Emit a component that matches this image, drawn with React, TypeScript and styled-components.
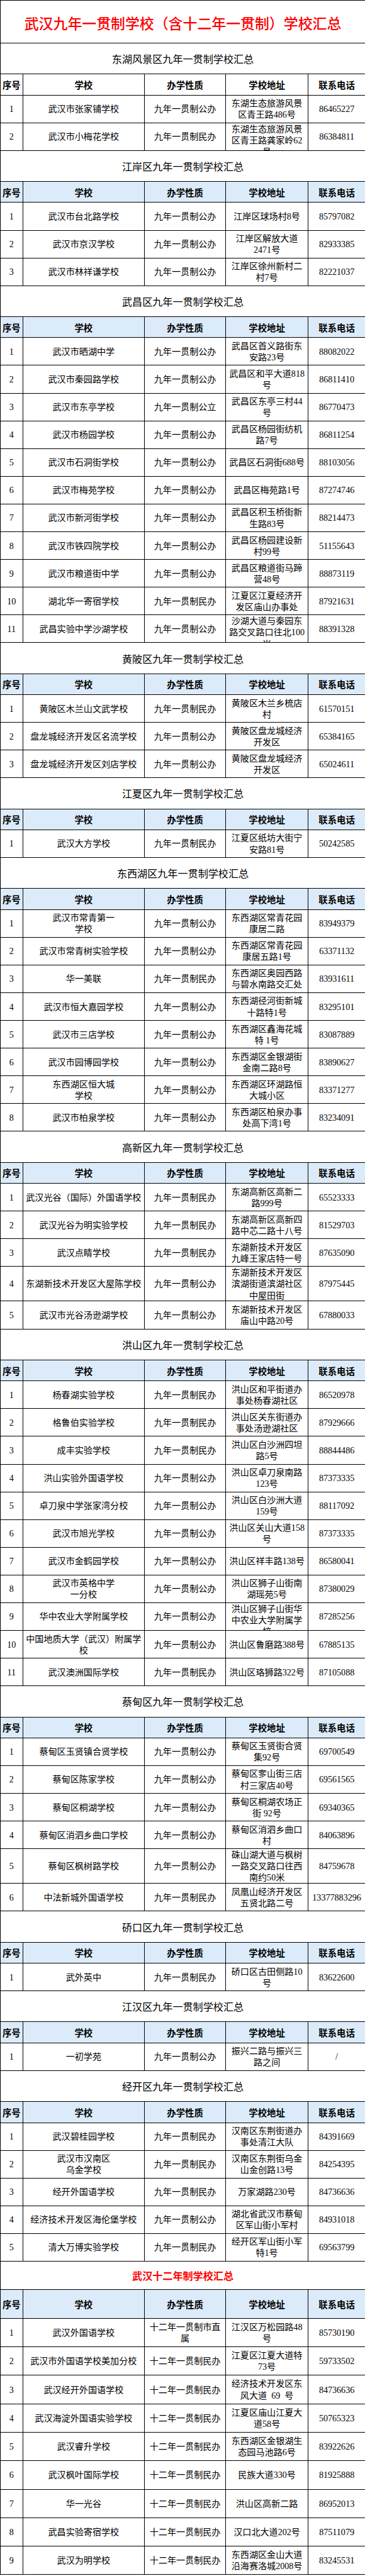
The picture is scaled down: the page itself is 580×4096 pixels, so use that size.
import React from 'react';
import styled, { createGlobalStyle } from 'styled-components';

const GlobalStyle = createGlobalStyle`
  html, body { margin: 0; padding: 0; background: #ffffff; }
  body { font-family: "Liberation Serif", "Noto Sans CJK SC", serif; }
`;

type Row = { n: string; school: string; kind: string; addr: string; phone: string; tall?: boolean };
type Section = { title: string; red?: boolean; plain?: boolean; big?: boolean; rows: Row[] };

const r = (n: string, school: string, kind: string, addr: string, phone: string, tall?: boolean): Row => ({
  n, school, kind, addr, phone, tall,
});

const A = '九年一贯制公办';
const M = '九年一贯制民办';
const T = '十二年一贯制民办';

const sections: Section[] = [
  {
    title: '东湖风景区九年一贯制学校汇总',
    plain: true,
    rows: [
      r('1', '武汉市张家铺学校', A, '东湖生态旅游风景区青王路486号', '86465227'),
      r('2', '武汉市小梅花学校', M, '东湖生态旅游风景区青王路龚家岭62号', '86384811'),
    ],
  },
  {
    title: '江岸区九年一贯制学校汇总',
    rows: [
      r('1', '武汉市台北路学校', A, '江岸区球场村8号', '85797082'),
      r('2', '武汉市京汉学校', A, '江岸区解放大道2471号', '82933385'),
      r('3', '武汉市林祥谦学校', A, '江岸区徐州新村二村7号', '82221037'),
    ],
  },
  {
    title: '武昌区九年一贯制学校汇总',
    rows: [
      r('1', '武汉市晒湖中学', A, '武昌区首义路街东安路23号', '88082022'),
      r('2', '武汉市秦园路学校', A, '武昌区和平大道818号', '86811410'),
      r('3', '武汉市东亭学校', '九年一贯制公立', '武昌区东亭三村44号', '86770473'),
      r('4', '武汉市杨园学校', A, '武昌区杨园街纺机路7号', '86811254'),
      r('5', '武汉市石洞街学校', A, '武昌区石洞街688号', '88103056'),
      r('6', '武汉市梅苑学校', A, '武昌区梅苑路1号', '87274746'),
      r('7', '武汉市新河街学校', A, '武昌区积玉桥街新生路83号', '88214473'),
      r('8', '武汉市铁四院学校', A, '武昌区杨园建设新村99号', '51155643'),
      r('9', '武汉市粮道街中学', A, '武昌区粮道街马蹄营48号', '88873119'),
      r('10', '湖北华一寄宿学校', M, '江夏区江夏经济开发区庙山办事处', '87921631'),
      r('11', '武昌实验中学沙湖学校', A, '沙湖大道与秦园东路交叉路口往北100米', '88391328'),
    ],
  },
  {
    title: '黄陂区九年一贯制学校汇总',
    rows: [
      r('1', '黄陂区木兰山文武学校', M, '黄陂区木兰乡梳店村', '61570151'),
      r('2', '盘龙城经济开发区名流学校', A, '黄陂区盘龙城经济开发区', '65384165'),
      r('3', '盘龙城经济开发区刘店学校', A, '黄陂区盘龙城经济开发区', '65024611'),
    ],
  },
  {
    title: '江夏区九年一贯制学校汇总',
    rows: [r('1', '武汉大方学校', M, '江夏区纸坊大街宁安路81号', '50242585')],
  },
  {
    title: '东西湖区九年一贯制学校汇总',
    rows: [
      r('1', '武汉市常青第一\n学校', A, '东西湖区常青花园康居二路', '83949379'),
      r('2', '武汉市常青树实验学校', A, '东西湖区常青花园康居五路1号', '63371132'),
      r('3', '华一美联', M, '东西湖区奥园西路与碧水南路交汇处', '83931611'),
      r('4', '武汉市恒大嘉园学校', A, '东西湖径河街新城十路特1号', '83295101'),
      r('5', '武汉市三店学校', A, '东西湖区鑫海花城特 1号', '83087889'),
      r('6', '武汉市园博园学校', A, '东西湖区金银湖街金南二路8号', '83890627'),
      r('7', '东西湖区恒大城\n学校', A, '东西湖区环湖路恒大城小区', '83371277'),
      r('8', '武汉市柏泉学校', A, '东西湖区柏泉办事处高下湾1号', '83234091'),
    ],
  },
  {
    title: '高新区九年一贯制学校汇总',
    rows: [
      r('1', '武汉光谷（国际）外国语学校', M, '东湖高新区高新二路999号', '65523333'),
      r('2', '武汉光谷为明实验学校', M, '东湖高新区高新四路中芯二路十八号', '81529703'),
      r('3', '武汉点睛学校', M, '东湖新技术开发区九峰王家店特一号', '87635090'),
      r('4', '东湖新技术开发区大屋陈学校', A, '东湖新技术开发区滨湖街道滨湖社区中屋田街', '87975445', true),
      r('5', '武汉市光谷汤逊湖学校', A, '东湖新技术开发区庙山中路20号', '67880033'),
    ],
  },
  {
    title: '洪山区九年一贯制学校汇总',
    rows: [
      r('1', '杨春湖实验学校', M, '洪山区和平街道办事处杨春湖社区', '86520978'),
      r('2', '格鲁伯实验学校', M, '洪山区关东街道办事处汤逊湖社区', '87929666'),
      r('3', '成丰实验学校', M, '洪山区白沙洲四坦路5号', '88844486'),
      r('4', '洪山实验外国语学校', A, '洪山区卓刀泉南路123号', '87373335'),
      r('5', '卓刀泉中学张家湾分校', A, '洪山区白沙洲大道159号', '88117092'),
      r('6', '武汉市旭光学校', A, '洪山区关山大道158号', '87373335'),
      r('7', '武汉市金鹤园学校', A, '洪山区祥丰路138号', '86580041'),
      r('8', '武汉市英格中学\n一分校', A, '洪山区狮子山街南湖瑶苑5号', '87380029'),
      r('9', '华中农业大学附属学校', A, '洪山区狮子山街华中农业大学附属学校', '87285256'),
      r('10', '中国地质大学（武汉）附属学校', A, '洪山区鲁磨路388号', '67885135'),
      r('11', '武汉澳洲国际学校', M, '洪山区珞狮路322号', '87105088'),
    ],
  },
  {
    title: '蔡甸区九年一贯制学校汇总',
    rows: [
      r('1', '蔡甸区玉贤镇合贤学校', A, '蔡甸区玉贤街合贤集92号', '69700549'),
      r('2', '蔡甸区陈家学校', A, '蔡甸区奓山街三店村三家店40号', '69561565'),
      r('3', '蔡甸区桐湖学校', A, '蔡甸区桐湖农场正街 92号', '69340365'),
      r('4', '蔡甸区消泗乡曲口学校', A, '蔡甸区消泗乡曲口村', '84063896'),
      r('5', '蔡甸区枫树路学校', A, '硃山湖大道与枫树一路交叉路口往西南约50米', '84759678', true),
      r('6', '中法新城外国语学校', M, '凤凰山经济开发区五贤北路二号', '13377883296'),
    ],
  },
  {
    title: '硚口区九年一贯制学校汇总',
    rows: [r('1', '武外英中', M, '硚口区古田侧路10号', '83622600')],
  },
  {
    title: '江汉区九年一贯制学校汇总',
    rows: [r('1', '一初学苑', A, '振兴二路与振兴三路之间', '/')],
  },
  {
    title: '经开区九年一贯制学校汇总',
    rows: [
      r('1', '武汉碧桂园学校', M, '汉南区东荆街道办事处清江大队', '84391669'),
      r('2', '武汉市汉南区\n乌金学校', M, '汉南区东荆街乌金山金创路13号', '84254395'),
      r('3', '经开外国语学校', M, '万家湖路230号', '84736636'),
      r('4', '经济技术开发区海伦堡学校', A, '湖北省武汉市蔡甸区军山街小军村', '84931018'),
      r('5', '清大万博实验学校', M, '经开区军山街小军特1号', '69563799'),
    ],
  },
  {
    title: '武汉十二年制学校汇总',
    red: true,
    big: true,
    rows: [
      r('1', '武汉外国语学校', '十二年一贯制市直属', '江汉区万松园路48号', '85730190'),
      r('2', '武汉市外国语学校美加分校', T, '江夏区江夏大道特73号', '59733502'),
      r('3', '武汉经开外国语学校', T, '经济技术开发区东风大道  69  号', '84736636'),
      r('4', '武汉海淀外国语实验学校', T, '江夏区庙山江夏大道58号', '50765323'),
      r('5', '武汉睿升学校', T, '东西湖区金银湖生态园马池路6号', '83922626'),
      r('6', '武汉枫叶国际学校', T, '民族大道330号', '81925888'),
      r('7', '华一光谷', T, '洪山区高新二路', '86952013'),
      r('8', '武昌实验寄宿学校', T, '汉口北大道202号', '87511079'),
      r('9', '武汉为明学校', T, '东西湖区金山大道沿海赛洛城2008号', '83245531'),
    ],
  },
];

const COLS = [35.6, 193.5, 129, 131, 90.9];

const Page = styled.main`
  width: 580px;
  background: #ffffff;
`;

const Sheet = styled.table`
  width: 580px;
  border-collapse: collapse;
  table-layout: fixed;
  color: #000000;
  font-family: "Liberation Serif", "Noto Sans CJK SC", serif;
`;

const Col = styled.col<{ $w: number }>`
  width: ${(p) => p.$w}px;
`;

const Cell = styled.td<{ $head?: boolean }>`
  border: 1px solid #000000;
  padding: 0;
  background: ${(p) => (p.$head ? '#dcebf9' : '#ffffff')};
`;

const Box = styled.div<{ $h: number }>`
  height: ${(p) => p.$h}px;
  display: flex;
  flex-direction: column;
  justify-content: safe center;
  align-items: center;
  overflow: hidden;
  padding: 0 3px;
  text-align: center;
  font-size: 14.1px;
  line-height: 18.1px;
  white-space: pre-wrap;
`;

const MainTitle = styled.div`
  height: 67px;
  display: flex;
  align-items: center;
  justify-content: center;
  padding-top: 3px;
  box-sizing: border-box;
  color: #ff0000;
  font-family: "Noto Sans CJK SC", sans-serif;
  font-size: 22.9px;
  font-weight: 500;
  letter-spacing: 0;
`;

const SectionTitle = styled.div<{ $h: number; $red?: boolean }>`
  height: ${(p) => p.$h}px;
  display: flex;
  align-items: center;
  justify-content: center;
  color: ${(p) => (p.$red ? '#ff0000' : '#000000')};
  font-family: "Noto Sans CJK SC", sans-serif;
  font-size: 16.1px;
  font-weight: ${(p) => (p.$red ? 700 : 400)};
`;

const HeadText = styled.div<{ $h: number }>`
  height: ${(p) => p.$h}px;
  display: flex;
  align-items: center;
  justify-content: center;
  font-family: "Noto Sans CJK SC", sans-serif;
  font-size: 14.4px;
  font-weight: 700;
  white-space: nowrap;
`;

const HEADERS = ['序号', '学校', '办学性质', '学校地址', '联系电话'];

function SectionBlock({ s }: { s: Section }) {
  const headingH = s.big ? 44.4 : 48.25;
  const headerH = s.big ? 44.4 : 32.4;
  const rowH = s.big ? 44.3 : 43.1;
  return (
    <>
      <tr>
        <Cell colSpan={5}>
          <SectionTitle $h={headingH} $red={s.red}>{s.title}</SectionTitle>
        </Cell>
      </tr>
      <tr>
        {HEADERS.map((h) => (
          <Cell key={h} $head={!s.plain}>
            <HeadText $h={headerH}>{h}</HeadText>
          </Cell>
        ))}
      </tr>
      {s.rows.map((row) => {
        const h = row.tall ? 54.1 : rowH;
        return (
          <tr key={row.n}>
            <Cell><Box $h={h}>{row.n}</Box></Cell>
            <Cell><Box $h={h}>{row.school}</Box></Cell>
            <Cell><Box $h={h}>{row.kind}</Box></Cell>
            <Cell><Box $h={h}>{row.addr}</Box></Cell>
            <Cell><Box $h={h}>{row.phone}</Box></Cell>
          </tr>
        );
      })}
    </>
  );
}

export default function App() {
  return (
    <Page>
      <GlobalStyle />
      <Sheet>
        <colgroup>
          {COLS.map((w, i) => (
            <Col key={i} $w={w} />
          ))}
        </colgroup>
        <tbody>
          <tr>
            <Cell colSpan={5}>
              <MainTitle>武汉九年一贯制学校（含十二年一贯制）学校汇总</MainTitle>
            </Cell>
          </tr>
          {sections.map((s) => (
            <SectionBlock key={s.title} s={s} />
          ))}
        </tbody>
      </Sheet>
    </Page>
  );
}
